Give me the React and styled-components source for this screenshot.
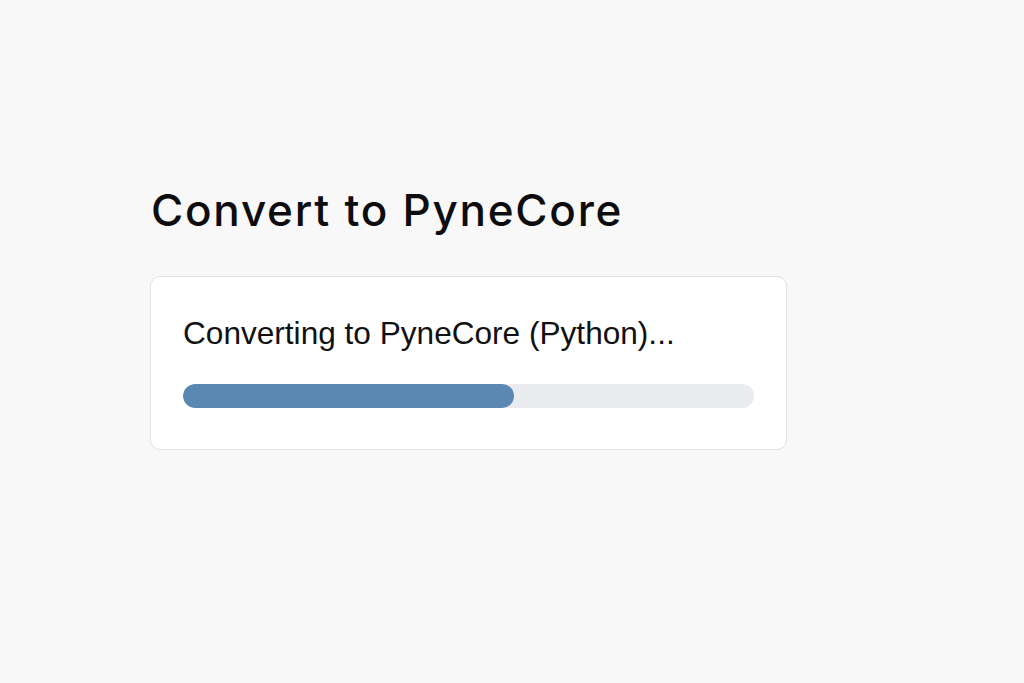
import React from "react";
import styled, { createGlobalStyle } from "styled-components";

const GlobalStyle = createGlobalStyle`
	html, body {
		margin: 0;
		padding: 0;
		background: #f8f8f9;
	}
	body {
		font-family: "Liberation Sans", Arial, sans-serif;
		color: #111;
	}
`;

export default function App() {
	const progress = 58;
	return (
		<>
			<GlobalStyle />
			<Page>
				<Title>Convert to PyneCore</Title>
				<Card>
					<Status>Converting to PyneCore (Python)...</Status>
					<Track>
						<Fill style={{ width: `${progress}%` }} />
					</Track>
				</Card>
			</Page>
		</>
	);
}

const Page = styled.main`
	min-height: 683px;
	box-sizing: border-box;
	padding: 180px 0 0 150px;
	display: flex;
	flex-direction: column;
	align-items: flex-start;
`;

const Title = styled.h1`
	margin: 0 0 36px 1px;
	font-family: Inter, "Liberation Sans", sans-serif;
	font-weight: 500;
	font-size: 44px;
	letter-spacing: 1.75px;
	line-height: 60px;
	color: #0d0d0f;
`;

const Card = styled.section`
	width: 637px;
	box-sizing: border-box;
	background: #fff;
	border: 1px solid #e1e1e4;
	border-radius: 10px;
	padding: 38px 32px 41px 32px;
	display: flex;
	flex-direction: column;
	gap: 33px;
`;

const Status = styled.p`
	margin: 0;
	font-size: 31.6px;
	line-height: 36px;
	color: #111;
`;

const Track = styled.div`
	height: 24px;
	border-radius: 12px;
	background: #e9ebee;
	overflow: hidden;
`;

const Fill = styled.div`
	height: 100%;
	border-radius: 12px;
	background: #5a88b2;
`;
